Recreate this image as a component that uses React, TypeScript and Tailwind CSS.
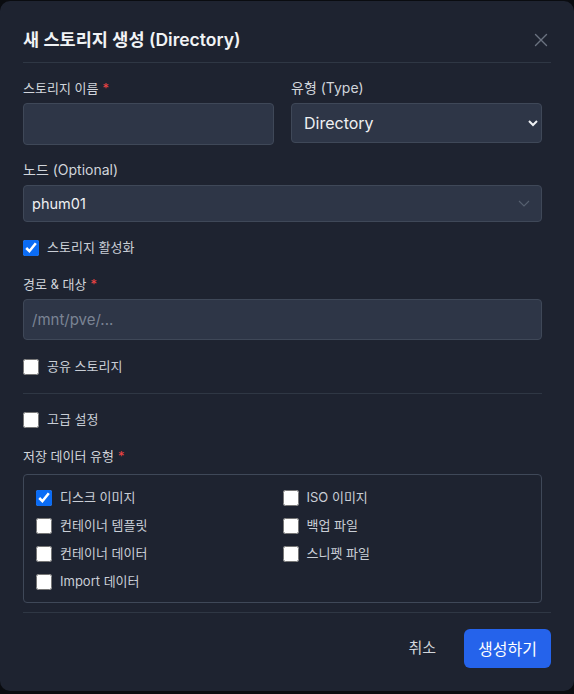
import React from "react";

const font = { fontFamily: 'Inter, "Noto Sans CJK KR", sans-serif' };

function Check({ checked, label }: { checked?: boolean; label: string }) {
  return (
    <label className="flex h-5 items-center gap-[8px] text-[13px] text-[#c9ced6]">
      <input type="checkbox" defaultChecked={checked} className="m-0 h-4 w-4 accent-[#0b6cf5]" />
      <span>{label}</span>
    </label>
  );
}

function Req() {
  return <span className="ml-1 text-[#ef4444]">*</span>;
}

export default function App() {
  return (
    <div className="min-h-screen bg-[#0a0c10] pt-px" style={font}>
      <div className="flex h-[690px] w-full flex-col rounded-[10px] bg-[#1e2330] px-[23px]">
        <div className="flex items-center justify-between border-b border-[#2f3744] pb-[10px] pt-[27px]">
          <h2 className="text-[17.5px] font-semibold leading-6 text-[#f1f3f5]">새 스토리지 생성 (Directory)</h2>
          <svg width="14" height="14" viewBox="0 0 14 14" className="mr-[3px] text-[#6b7280]">
            <path d="M1.5 1.5l11 11M12.5 1.5l-11 11" stroke="currentColor" strokeWidth="1.4" strokeLinecap="round" />
          </svg>
        </div>

        <div className="flex flex-1 flex-col pb-[9px] pr-[9px] pt-[15px]">
          <div className="grid grid-cols-2 items-start gap-x-[17px]">
            <div className="flex flex-col gap-[5px]">
              <span className="text-[13px] leading-5 text-[#d1d5db]">
                스토리지 이름<Req />
              </span>
              <input className="h-[42px] rounded-[4px] border border-[#3f4858] bg-[#2e3647] px-3 text-white outline-none" />
            </div>
            <div className="flex flex-col gap-[5px]">
              <span className="text-sm leading-5 text-[#d1d5db]">유형 (Type)</span>
              <select
                defaultValue="Directory"
                className="h-10 rounded-[4px] border border-[#3f4858] bg-[#2e3647] pl-[8px] pr-1 text-base text-[#eef0f3] outline-none"
              >
                <option>Directory</option>
              </select>
            </div>
          </div>

          <div className="mt-[15px] flex flex-col gap-[5px]">
            <span className="text-sm leading-5 text-[#d1d5db]">노드 (Optional)</span>
            <div className="flex h-[37px] items-center justify-between rounded-[4px] border border-[#3f4858] bg-[#2e3647] pl-2 pr-[11px]">
              <span className="text-[14.5px] text-[#eef0f3]">phum01</span>
              <svg width="12" height="7" viewBox="0 0 12 7" className="text-[#566070]">
                <path d="M1 1l5 5 5-5" fill="none" stroke="currentColor" strokeWidth="1.1" />
              </svg>
            </div>
          </div>

          <div className="mt-4">
            <Check checked label="스토리지 활성화" />
          </div>

          <div className="mt-4 flex flex-col gap-[5px]">
            <span className="text-[13px] leading-5 text-[#d1d5db]">
              경로 &amp; 대상<Req />
            </span>
            <input
              placeholder="/mnt/pve/..."
              className="h-[41px] rounded-[4px] border border-[#3f4858] bg-[#2e3647] px-2 text-[15px] text-white outline-none placeholder:text-[#7b8494]"
            />
          </div>

          <div className="mt-[17px]">
            <Check label="공유 스토리지" />
          </div>

          <div className="mt-4 border-t border-[#2f3744]" />

          <div className="mt-4">
            <Check label="고급 설정" />
          </div>

          <div className="mt-4 flex flex-col gap-2">
            <span className="text-[13px] leading-5 text-[#d1d5db]">
              저장 데이터 유형<Req />
            </span>
            <div className="grid grid-cols-2 gap-y-2 rounded-[4px] border border-[#3f4858] pb-[10px] pl-[12px] pr-3 pt-[13px]">
              <Check checked label="디스크 이미지" />
              <Check label="ISO 이미지" />
              <Check label="컨테이너 템플릿" />
              <Check label="백업 파일" />
              <Check label="컨테이너 데이터" />
              <Check label="스니펫 파일" />
              <Check label="Import 데이터" />
            </div>
          </div>
        </div>

        <div className="flex items-center justify-end gap-3 border-t border-[#2f3744] pb-[23px] pt-[16px]">
          <button className="h-[39px] px-4 text-[15px] text-[#d1d5db]">취소</button>
          <button className="h-[39px] w-[87px] rounded-[6px] bg-[#2563eb] text-[16px] text-white">생성하기</button>
        </div>
      </div>
    </div>
  );
}
